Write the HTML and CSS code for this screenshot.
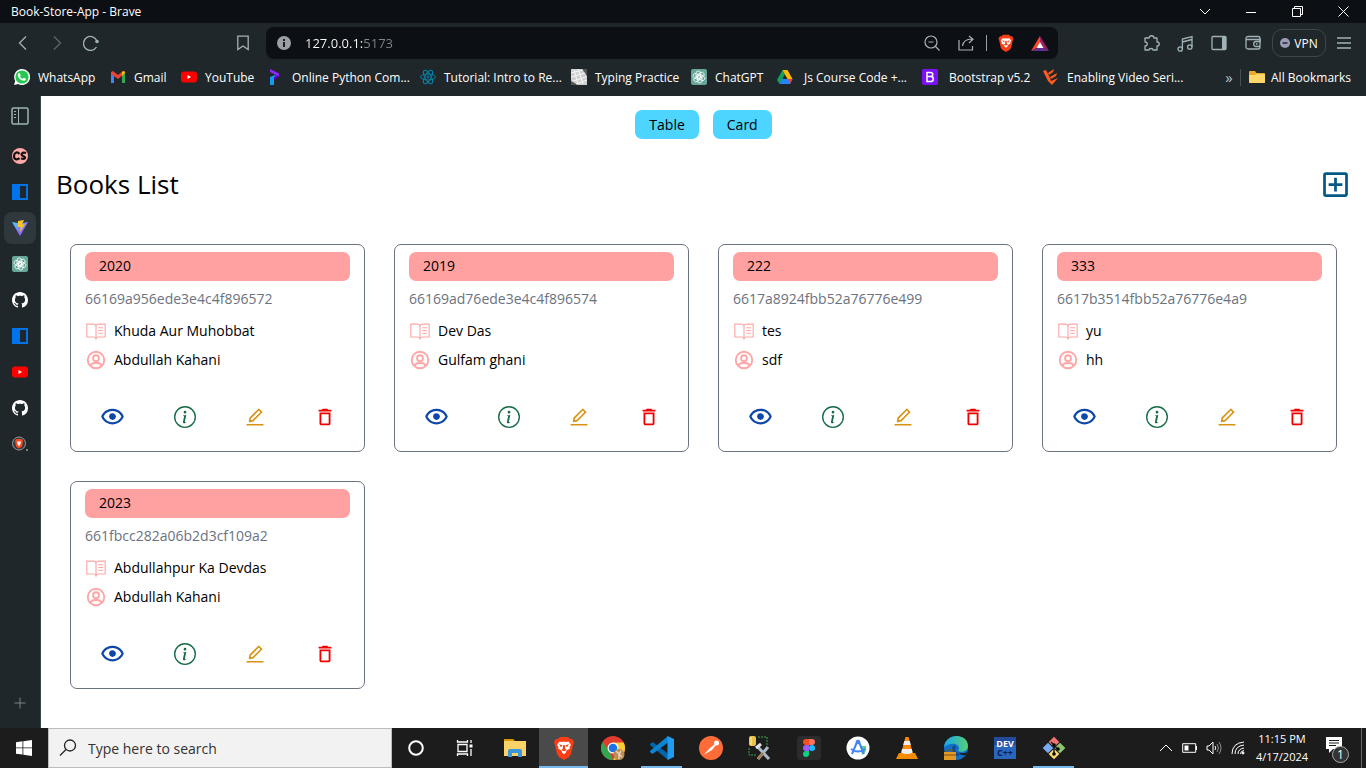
FILE: index.html
```html
<!DOCTYPE html>
<html lang="en">
<head>
<meta charset="utf-8">
<title>Book-Store-App</title>
<link rel="stylesheet" href="styles.css">
</head>
<body>
<svg class="sprite" aria-hidden="true">
  <symbol id="eye" viewBox="0 0 24 24"><path d="M12 9a3.02 3.02 0 0 0-3 3c0 1.642 1.358 3 3 3 1.641 0 3-1.358 3-3 0-1.641-1.359-3-3-3z"/><path d="M12 5c-7.633 0-9.927 6.617-9.948 6.684L1.946 12l.105.316C2.073 12.383 4.367 19 12 19s9.927-6.617 9.948-6.684l.106-.316-.105-.316C21.927 11.617 19.633 5 12 5zm0 12c-5.351 0-7.424-3.846-7.926-5C4.578 10.842 6.652 7 12 7c5.351 0 7.424 3.846 7.926 5-.504 1.158-2.578 5-7.926 5z"/></symbol>
  <symbol id="info" viewBox="0 0 16 16"><path d="M8 15A7 7 0 1 1 8 1a7 7 0 0 1 0 14m0 1A8 8 0 1 0 8 0a8 8 0 0 0 0 16"/><path d="m8.93 6.588-2.29.287-.082.38.45.083c.294.07.352.176.288.469l-.738 3.468c-.194.897.105 1.319.808 1.319.545 0 1.178-.252 1.465-.598l.088-.416c-.2.176-.492.246-.686.246-.275 0-.375-.193-.304-.533zM9 4.5a1 1 0 1 1-2 0 1 1 0 0 1 2 0"/></symbol>
  <symbol id="edit" viewBox="0 0 1024 1024"><path d="M257.7 752c2 0 4-.2 6-.5L431.9 722c2-.4 3.9-1.3 5.3-2.8l423.9-423.9a9.96 9.96 0 0 0 0-14.1L694.9 114.9c-1.9-1.9-4.4-2.9-7.1-2.9s-5.2 1-7.1 2.9L256.8 538.8c-1.5 1.5-2.4 3.3-2.8 5.3l-29.5 168.2a33.5 33.5 0 0 0 9.4 29.8c6.6 6.4 14.9 9.9 23.8 9.9zm67.4-174.4L687.8 215l73.3 73.3-362.7 362.6-88.9 15.7 15.6-89zM880 836H144c-17.7 0-32 14.3-32 32v36c0 4.4 3.6 8 8 8h784c4.4 0 8-3.6 8-8v-36c0-17.7-14.3-32-32-32z"/></symbol>
  <symbol id="trash" viewBox="0 0 24 24"><path d="M16 9v10H8V9h8m-1.500-6h-5l-1 1H5v2h14V4h-3.500l-1-1zM18 7H6v12c0 1.100.9 2 2 2h8c1.100 0 2-.9 2-2V7z"/></symbol>
  <symbol id="addbox" viewBox="0 0 24 24"><path d="M19 3H5a2 2 0 0 0-2 2v14a2 2 0 0 0 2 2h14c1.100 0 2-.9 2-2V5a2 2 0 0 0-2-2zm0 16H5V5h14v14zm-8-2h2v-4h4v-2h-4V7h-2v4H7v2h4z"/></symbol>
  <symbol id="book" viewBox="0 0 24 24"><g fill="none" stroke="currentColor" stroke-width="1.200"><path d="M12 6.500C11.500 5 10.500 4.500 9 4.500H2v14h7c1.700 0 2.600.6 3 2 .4-1.400 1.300-2 3-2h7v-14h-7c-1.500 0-2.500.5-3 2zM12 6.500v14M14.500 8.500h5M14.500 11.500h5M14.500 14.500h5"/></g></symbol>
  <symbol id="user" viewBox="0 0 24 24"><g fill="none" stroke="currentColor" stroke-width="2"><circle cx="12" cy="12" r="9"/><circle cx="12" cy="10" r="3.200"/><path d="M5.800 18.500c1-2.200 3-3.200 5.200-3.200h2c2.200 0 4.200 1 5.200 3.200"/></g></symbol>
  <symbol id="github" viewBox="0 0 16 16"><path fill="#fff" d="M8 0C3.580 0 0 3.580 0 8c0 3.540 2.290 6.530 5.470 7.590.4.070.550-.170.550-.380 0-.190-.010-.820-.010-1.490-2.010.370-2.530-.490-2.690-.940-.090-.230-.480-.940-.820-1.130-.280-.150-.680-.520-.010-.530.630-.010 1.080.580 1.230.820.720 1.210 1.870.870 2.330.660.070-.520.280-.870.510-1.070-1.780-.2-3.640-.890-3.640-3.950 0-.870.310-1.590.820-2.150-.080-.2-.360-1.020.080-2.120 0 0 .670-.210 2.200.820.640-.180 1.320-.270 2-.270s1.360.090 2 .270c1.530-1.040 2.200-.820 2.200-.820.440 1.100.160 1.920.080 2.120.510.560.820 1.270.820 2.150 0 3.070-1.870 3.750-3.650 3.950.290.250.540.730.540 1.480 0 1.070-.010 1.930-.010 2.200 0 .210.150.460.550.380A8.010 8.010 0 0 0 16 8c0-4.420-3.580-8-8-8z"/></symbol>
  <symbol id="youtube" viewBox="0 0 16 16"><rect y="2.500" width="16" height="11" rx="3" fill="#f00"/><path d="M6.500 6v4L10 8z" fill="#fff"/></symbol>
  <symbol id="gpt" viewBox="0 0 16 16"><rect width="16" height="16" rx="2" fill="#66a799"/><g fill="none" stroke="#fff" stroke-width=".8"><rect x="5" y="2" width="4.600" height="7.600" rx="2.300"/><rect x="5" y="2" width="4.600" height="7.600" rx="2.300" transform="rotate(60 8 8)"/><rect x="5" y="2" width="4.600" height="7.600" rx="2.300" transform="rotate(120 8 8)"/><rect x="5" y="2" width="4.600" height="7.600" rx="2.300" transform="rotate(180 8 8)"/><rect x="5" y="2" width="4.600" height="7.600" rx="2.300" transform="rotate(240 8 8)"/><rect x="5" y="2" width="4.600" height="7.600" rx="2.300" transform="rotate(300 8 8)"/></g></symbol>
  <symbol id="panel" viewBox="0 0 16 16"><path fill="#0075eb" d="M0 0h16v16H0z"/><path fill="#20272a" d="M8 2h6v12H8z"/></symbol>
  <symbol id="brave" viewBox="0 0 20 24"><path d="M6 1h8l2 2 2 0 2 3-1 3-2 9-2 3-5 3-5-3-2-3L1 9 0 6l2-3h2z" fill="#fb3d13"/><path d="M5.500 5.500l2.500.5 2-.5 2 .5 2.500-.5L17 9l-1.500 2 .5 1.500-3.500 2L12 16.500l-2 1.700-2-1.700-.5-2-3.500-2 .5-1.500L3 9z" fill="#fff"/><path d="M5 8.200l3.500 1-1.500 2zM15 8.200l-3.500 1 1.500 2zM9.200 9h1.600l.5 4 1.500 1-2.800 1.200L7.200 14l1.500-1z" fill="#fb3d13"/></symbol>
</svg>

<div class="desktop">
  <header class="browser">
    <div class="titlebar">
      <span class="window-title">Book-Store-App - Brave</span>
      <button class="win-btn" aria-label="Search tabs"><svg width="12" height="12" viewBox="0 0 12 12"><path d="M1 3l5 5 5-5"/></svg></button>
      <button class="win-btn" aria-label="Minimize"><svg width="10" height="10" viewBox="0 0 10 10"><path d="M0 5.500h10"/></svg></button>
      <button class="win-btn" aria-label="Restore"><svg width="11" height="11" viewBox="0 0 11 11"><path d="M.5 2.500h8v8h-8zM2.500 2.500v-2h8v8h-2"/></svg></button>
      <button class="win-btn" aria-label="Close"><svg width="11" height="11" viewBox="0 0 11 11"><path d="M.5.5l10 10M10.500.5l-10 10"/></svg></button>
    </div>
    <div class="toolbar">
      <div class="nav-group">
        <button class="tool" aria-label="Back"><svg width="16" height="16" viewBox="0 0 16 16"><path d="M11 1.500L4.500 8l6.500 6.500"/></svg></button>
        <button class="tool dim" aria-label="Forward"><svg width="16" height="16" viewBox="0 0 16 16"><path d="M5 1.500L11.500 8 5 14.500"/></svg></button>
        <button class="tool" aria-label="Reload"><svg width="16" height="16" viewBox="0 0 16 16"><path d="M14 6A7 7 0 1 0 13.500 12"/><circle cx="14" cy="6.500" r="1.800" fill="currentColor" stroke="none"/></svg></button>
        <button class="tool bookmark" aria-label="Bookmark this page"><svg width="16" height="16" viewBox="0 0 16 16"><path d="M2.800 1.200h10.400v13.300L8 11l-5.200 3.500z"/></svg></button>
      </div>
      <div class="address">
        <svg width="14" height="14" viewBox="0 0 14 14"><circle cx="7" cy="7" r="7" fill="#9aa0a6"/><path d="M7 3v2M7 6v5" stroke="#0c0f14" stroke-width="1.800"/></svg>
        <input class="url" type="text" value="127.0.0.1:5173" aria-label="Address">
        <button class="addr-btn" aria-label="Zoom"><svg width="16" height="16" viewBox="0 0 16 16"><circle cx="7" cy="7" r="6"/><path d="M4.500 7h5M11.500 11.500l4 4"/></svg></button>
        <button class="addr-btn narrow" aria-label="Share"><svg width="16" height="16" viewBox="0 0 16 16"><path d="M1 5v10h13.500v-4M4.500 11c.5-4 3-7 9.500-7M11 1l4 3.200L11 8"/></svg></button>
        <span class="addr-sep"></span>
        <button class="addr-btn narrow" aria-label="Brave Shields"><svg width="16" height="18"><use href="#brave"/></svg></button>
        <button class="addr-btn solid" aria-label="Rewards"><svg width="18" height="15" viewBox="0 0 18 15"><path d="M9 0L0 15l9-5z" fill="#ff4724"/><path d="M9 0l9 15-9-5z" fill="#9e1f63"/><path d="M0 15h18l-9-5z" fill="#662d91"/><path d="M9 6l3.500 6h-7z" fill="#fff"/></svg></button>
      </div>
      <div class="tool-group">
        <button class="tool" aria-label="Extensions"><svg width="17" height="17" viewBox="0 0 17 17"><path d="M2 3h4c0-3 5-3 5 0h3v4c3 0 3 4 0 4v4h-4c0-2-4-2-4 0H2v-4c3 0 3-4 0-4z" stroke-linejoin="round"/></svg></button>
        <button class="tool" aria-label="Playlist"><svg width="17" height="17" viewBox="0 0 17 17"><circle cx="3.200" cy="14" r="2.200"/><circle cx="12.800" cy="12" r="2.200"/><path d="M5.400 14V4L15 1.500V12M5.400 7L15 4.500"/></svg></button>
        <button class="tool" aria-label="Side panel"><svg width="16" height="16" viewBox="0 0 16 16"><rect x="1" y="1.500" width="14" height="13" rx="1"/><path d="M11 2h4v12h-4z" fill="currentColor" stroke="none"/></svg></button>
        <button class="tool" aria-label="Wallet"><svg width="16" height="16" viewBox="0 0 16 16"><rect x="1" y="1.500" width="14" height="12.500" rx="2"/><path d="M1 4.500h14v3M15 6.500h-4c-3 0-3 5 0 5h4M11 9h1.500"/></svg></button>
        <button class="vpn"><svg width="10" height="10" viewBox="0 0 10 10"><circle cx="5" cy="5" r="5" fill="#9a9cb5"/><path d="M2.500 5h5" stroke="#20272a" stroke-width="1.500"/></svg>VPN</button>
        <button class="tool" aria-label="Menu"><svg width="14" height="12" viewBox="0 0 14 12"><path d="M0 1h14M0 6h14M0 11h14"/></svg></button>
      </div>
    </div>
    <nav class="bookmarks">
      <div class="bookmark-list">
        <a href="#"><svg width="16" height="16" viewBox="0 0 16 16"><path d="M8 0a8 8 0 1 1-3.800 15L0 16l1.200-4A8 8 0 0 1 8 0z" fill="#fff"/><circle cx="8" cy="8" r="6.600" fill="#25c951"/><path d="M5.500 4l1.300 2.200-.8 1c.7 1.500 1.500 2 2.700 2.600l1-1 2.200 1c0 2-2 2.300-3.300 1.800C6 10.700 4.500 9 4 7c-.3-1.500.3-3 1.500-3z" fill="#fff"/></svg>WhatsApp</a>
        <a href="#"><svg width="16" height="16" viewBox="0 0 16 16"><path d="M1 4l3 2v8H1z" fill="#4285f4"/><path d="M12 6l3-2v10h-3z" fill="#34a853"/><path d="M1 3l2-1 5 4 5-4v4l-5 4-7-5z" fill="#ea4335"/><path d="M12 3c2-2 3-1 3 1l-3 3z" fill="#fbbc04"/></svg>Gmail</a>
        <a href="#"><svg width="16" height="16"><use href="#youtube"/></svg>YouTube</a>
        <a href="#"><svg width="16" height="16" viewBox="0 0 16 16"><path d="M2 0l9 4.500v3L6 10V7l2-1-6-3z" fill="#9127ff"/><path d="M2 8l5-2v3l-1 1v6H2z" fill="#159bea"/><path d="M6 8l4-2 1 1.500L6 11z" fill="#5c00d0"/></svg>Online Python Com...</a>
        <a href="#"><svg width="16" height="16" viewBox="0 0 16 16" fill="none" stroke="#087ea4"><ellipse cx="8" cy="8" rx="7.500" ry="3"/><ellipse cx="8" cy="8" rx="7.500" ry="3" transform="rotate(60 8 8)"/><ellipse cx="8" cy="8" rx="7.500" ry="3" transform="rotate(120 8 8)"/><circle cx="8" cy="8" r="1"/></svg>Tutorial: Intro to Re...</a>
        <a href="#"><svg width="16" height="16" viewBox="0 0 16 16"><path fill="#cfcfcf" d="M0 0h16v16H0z"/><path d="M11 0h5v7zM0 12l7 4H0z" fill="#555"/><path d="M0 4l12-3M0 8l14-4M2 12l13-4M5 15l11-4M3 1l4 14M7 0l5 15" stroke="#f7f7f7" fill="none"/></svg>Typing Practice</a>
        <a href="#"><svg width="16" height="16"><use href="#gpt"/></svg>ChatGPT</a>
        <a href="#" class="wide"><svg width="16" height="16" viewBox="0 0 16 16"><path d="M5.500 1L0 11l2.500 4L8 5z" fill="#12a15a"/><path d="M5.500 1h5l5 9h-5z" fill="#ffba00"/><path d="M5 10h10.500L13 15H2.500z" fill="#2684fc"/><path d="M11 10h4.500L13 15z" fill="#ea4335"/></svg>Js Course Code +...</a>
        <a href="#" class="wide"><svg width="16" height="16" viewBox="0 0 16 16"><rect width="16" height="16" rx="2" fill="#7b11f5"/><path d="M5 3.500h3.500c3 0 3 4 0 4H5zm0 4h4c3 0 3 5 0 5H5z" fill="none" stroke="#fff" stroke-width="1.500"/></svg>Bootstrap v5.2</a>
        <a href="#"><svg width="16" height="16" viewBox="0 0 16 16" fill="#ff5a1f"><path d="M0 2l3-1 4 8 1 3 7-3-6 7-4-4z"/><path d="M5 4l6-4-1 3-4 3zM7 8l7-4-1 3-5 3z"/></svg>Enabling Video Seri...</a>
      </div>
      <button class="more" aria-label="More bookmarks">»</button>
      <a href="#" class="all-bookmarks"><svg width="16" height="14" viewBox="0 0 16 14"><path d="M0 2q0-1 1-1h5l1.500 2H15q1 0 1 1v8q0 1-1 1H1q-1 0-1-1z" fill="#e8a92c"/><path d="M0 5h6l1.500-1H16v8q0 1-1 1H1q-1 0-1-1z" fill="#ffd768"/></svg>All Bookmarks</a>
    </nav>
  </header>

  <div class="window-body">
    <aside class="sidebar">
      <button class="tab-toggle" aria-label="Toggle vertical tabs"><svg width="18" height="18" viewBox="0 0 18 18" fill="none" stroke="#9fb2b8"><rect x="1" y="1" width="16" height="16" rx="1.500" stroke-width="1.500"/><path d="M7.500 1v16M3 4.500h2M3 7.500h2M3 10.500h2"/></svg></button>
      <div class="tabs">
        <button class="tab" aria-label="CS"><svg width="16" height="16" viewBox="0 0 16 16"><circle cx="8" cy="8" r="8" fill="#ffaaa9"/><path d="M7.500 6C5 3 2 5 2 8c0 3.500 3 4.500 5.500 2M14 5c-4-1.500-6 2-3 3s3 4-2 2.500" fill="none" stroke="#111" stroke-width="2.200"/></svg></button>
        <button class="tab" aria-label="Panel"><svg width="16" height="16"><use href="#panel"/></svg></button>
        <button class="tab active" aria-label="Book-Store-App"><svg width="16" height="16" viewBox="0 0 16 16"><defs><linearGradient id="vite" x1="0" x2="1" y2="1"><stop stop-color="#41d1ff"/><stop offset="1" stop-color="#bd34fe"/></linearGradient></defs><path d="M0 2l8 1.500L16 2 8 16z" fill="url(#vite)"/><path d="M6 1l6-1-2 4.500 3-.5-5 8 .7-5H5.500z" fill="#ffc517"/></svg></button>
        <button class="tab" aria-label="ChatGPT"><svg width="16" height="16"><use href="#gpt"/></svg></button>
        <button class="tab" aria-label="GitHub"><svg width="16" height="16"><use href="#github"/></svg></button>
        <button class="tab" aria-label="Panel"><svg width="16" height="16"><use href="#panel"/></svg></button>
        <button class="tab" aria-label="YouTube"><svg width="16" height="16"><use href="#youtube"/></svg></button>
        <button class="tab" aria-label="GitHub"><svg width="16" height="16"><use href="#github"/></svg></button>
        <button class="tab" aria-label="Brave Search"><svg width="16" height="16" viewBox="0 0 16 16"><circle cx="7" cy="7.500" r="6.500" fill="#38393d" stroke="#999"/><path d="M3 5l1.500-2h5L11 5l-1 5.500L7 12.500l-3-2z" fill="#ff4a20"/><path d="M5 5.500h4L8 9l-1 1-1-1z" fill="#fff"/><circle cx="15" cy="14" r="1" fill="#999"/></svg></button>
      </div>
      <button class="new-tab" aria-label="New tab"><svg width="12" height="12" viewBox="0 0 12 12"><path d="M6 .5v11M.5 6h11" stroke="#7b8285"/></svg></button>
    </aside>

    <main class="page">
      <div class="view-switch">
        <button>Table</button>
        <button>Card</button>
      </div>
      <div class="page-head">
        <h1>Books List</h1>
        <a href="#" class="add" aria-label="Add book"><svg width="33" height="33"><use href="#addbox"/></svg></a>
      </div>
      <div class="cards">
        <article class="card">
          <h2>2020</h2><p class="id">66169a956ede3e4c4f896572</p>
          <p class="row"><svg><use href="#book"/></svg>Khuda Aur Muhobbat</p>
          <p class="row"><svg><use href="#user"/></svg>Abdullah Kahani</p>
          <div class="actions"><button class="view" aria-label="Preview"><svg><use href="#eye"/></svg></button><a href="#" class="info" aria-label="Details"><svg><use href="#info"/></svg></a><a href="#" class="edit" aria-label="Edit"><svg><use href="#edit"/></svg></a><a href="#" class="delete" aria-label="Delete"><svg><use href="#trash"/></svg></a></div>
        </article>
        <article class="card">
          <h2>2019</h2><p class="id">66169ad76ede3e4c4f896574</p>
          <p class="row"><svg><use href="#book"/></svg>Dev Das</p>
          <p class="row"><svg><use href="#user"/></svg>Gulfam ghani</p>
          <div class="actions"><button class="view" aria-label="Preview"><svg><use href="#eye"/></svg></button><a href="#" class="info" aria-label="Details"><svg><use href="#info"/></svg></a><a href="#" class="edit" aria-label="Edit"><svg><use href="#edit"/></svg></a><a href="#" class="delete" aria-label="Delete"><svg><use href="#trash"/></svg></a></div>
        </article>
        <article class="card">
          <h2>222</h2><p class="id">6617a8924fbb52a76776e499</p>
          <p class="row"><svg><use href="#book"/></svg>tes</p>
          <p class="row"><svg><use href="#user"/></svg>sdf</p>
          <div class="actions"><button class="view" aria-label="Preview"><svg><use href="#eye"/></svg></button><a href="#" class="info" aria-label="Details"><svg><use href="#info"/></svg></a><a href="#" class="edit" aria-label="Edit"><svg><use href="#edit"/></svg></a><a href="#" class="delete" aria-label="Delete"><svg><use href="#trash"/></svg></a></div>
        </article>
        <article class="card">
          <h2>333</h2><p class="id">6617b3514fbb52a76776e4a9</p>
          <p class="row"><svg><use href="#book"/></svg>yu</p>
          <p class="row"><svg><use href="#user"/></svg>hh</p>
          <div class="actions"><button class="view" aria-label="Preview"><svg><use href="#eye"/></svg></button><a href="#" class="info" aria-label="Details"><svg><use href="#info"/></svg></a><a href="#" class="edit" aria-label="Edit"><svg><use href="#edit"/></svg></a><a href="#" class="delete" aria-label="Delete"><svg><use href="#trash"/></svg></a></div>
        </article>
        <article class="card">
          <h2>2023</h2><p class="id">661fbcc282a06b2d3cf109a2</p>
          <p class="row"><svg><use href="#book"/></svg>Abdullahpur Ka Devdas</p>
          <p class="row"><svg><use href="#user"/></svg>Abdullah Kahani</p>
          <div class="actions"><button class="view" aria-label="Preview"><svg><use href="#eye"/></svg></button><a href="#" class="info" aria-label="Details"><svg><use href="#info"/></svg></a><a href="#" class="edit" aria-label="Edit"><svg><use href="#edit"/></svg></a><a href="#" class="delete" aria-label="Delete"><svg><use href="#trash"/></svg></a></div>
        </article>
      </div>
    </main>
  </div>

  <footer class="taskbar">
    <button class="start" aria-label="Start"><svg width="16" height="16" viewBox="0 0 16 16" fill="#fff"><path d="M0 2.200L6.500 1.300v6.200H0zM7.300 1.200L16 0v7.500H7.300zM0 8.300h6.500v6.300L0 13.700zM7.300 8.300H16V16l-8.700-1.200z"/></svg></button>
    <label class="search">
      <svg width="18" height="18" viewBox="0 0 18 18" fill="none" stroke="#222" stroke-width="1.300"><circle cx="11" cy="6.500" r="5.500"/><path d="M7 10.500L1 16.500"/></svg>
      <input type="text" placeholder="Type here to search" aria-label="Search">
    </label>
    <div class="apps">
      <button class="app" aria-label="Cortana"><svg width="18" height="18" viewBox="0 0 18 18"><circle cx="9" cy="9" r="6.800" fill="none" stroke="#fff" stroke-width="2"/></svg></button>
      <button class="app" aria-label="Task view"><svg width="18" height="18" viewBox="0 0 18 18" fill="none" stroke="#fff" stroke-width="1.300"><path d="M2 5.500h9v7H2zM1.500 1v2h10V1M1.500 17v-2h10v2M15 1v3M15 10v7"/><path d="M13.500 5.500h3v3h-3z" fill="#fff" stroke="none"/></svg></button>
      <button class="app" aria-label="File Explorer"><svg width="22" height="18" viewBox="0 0 22 18"><path d="M0 0h9l2 2H0z" fill="#d99a00"/><path d="M0 2h22v15H0z" fill="#fdd367"/><path d="M4 18v-6q0-2 2-2h10q2 0 2 2v6h-4v-4H8v4z" fill="#3a96dd"/></svg></button>
      <button class="app current running" aria-label="Brave"><svg width="20" height="24"><use href="#brave"/></svg></button>
      <button class="app" aria-label="Chrome"><svg width="24" height="24" viewBox="0 0 24 24"><circle cx="12" cy="12" r="12" fill="#e33b2e"/><path d="M1.600 6L9 17l3 7A12 12 0 0 1 1.600 6z" fill="#31a850"/><path d="M12 6.500h10.700A12 12 0 0 1 12 24l5-9z" fill="#fcc934"/><circle cx="12" cy="12" r="5.500" fill="#fff"/><circle cx="12" cy="12" r="4.300" fill="#1a73e8"/><circle cx="18" cy="18.500" r="5.500" fill="#b98c5a"/><path d="M15 15l3 3v5M20 15l-2 3 3 3" stroke="#e8d4b0" fill="none" stroke-width="1.500"/></svg></button>
      <button class="app running" aria-label="Visual Studio Code"><svg width="24" height="24" viewBox="0 0 24 24"><path d="M0 8l2.500-2L18 17.500V24L0 9z" fill="#0065a9"/><path d="M0 16l2.500 2L18 6.500V0L0 15z" fill="#0b84d2"/><path d="M17.500 0L24 3v18l-6.500 3z" fill="#1f9cf0"/></svg></button>
      <button class="app" aria-label="Postman"><svg width="24" height="24" viewBox="0 0 24 24"><circle cx="12" cy="12" r="12" fill="#ff6c37"/><path d="M5 18.500L11 12l5-4 1 1-4 5-6 3.500z" fill="#fff"/><circle cx="17.500" cy="7" r="2.500" fill="#fff"/></svg></button>
      <button class="app" aria-label="Database tools"><svg width="24" height="24" viewBox="0 0 24 24"><path d="M10 1h9v9M1 12v7h8" fill="none" stroke="#39a845" stroke-dasharray="2 1"/><rect x="1" width="7" height="10" rx="2" fill="#ebc34a"/><path d="M3 1v8" stroke="#fff1a0"/><path d="M9 10l12 13M20 11L10 23" stroke="#aab8c8" stroke-width="3"/><path d="M15 17l-5 6" stroke="#a57744" stroke-width="2"/><path d="M8 12l5-4" stroke="#dde4ec" stroke-width="3"/></svg></button>
      <button class="app" aria-label="Figma"><svg width="24" height="24" viewBox="0 0 24 24"><rect width="24" height="24" rx="3" fill="#2c2c2c"/><path d="M12 3H9a3 3 0 0 0 0 6h3z" fill="#f24e1e"/><path d="M12 3h3a3 3 0 0 1 0 6h-3z" fill="#ff7262"/><path d="M12 9H9a3 3 0 0 0 0 6h3z" fill="#a259ff"/><circle cx="15" cy="12" r="3" fill="#1abcfe"/><path d="M12 15H9a3 3 0 1 0 3 3z" fill="#0acf83"/></svg></button>
      <button class="app" aria-label="Android Studio"><svg width="24" height="24" viewBox="0 0 24 24"><circle cx="12" cy="12" r="11.500" fill="#fff"/><path d="M14 10h6v5l-4 4z" fill="#4fd189"/><path d="M11 6L6 18M13 6l5 12M5 13q7 5 14 0" fill="none" stroke="#4285f4" stroke-width="2"/><circle cx="12" cy="6" r="2.300" fill="#4285f4"/></svg></button>
      <button class="app" aria-label="VLC"><svg width="22" height="24" viewBox="0 0 22 24"><path d="M3 17h16l3 6H0z" fill="#f48b00"/><path d="M9.500 1h3L17 18q-6 4-12 0z" fill="#ff8b0a"/><path d="M8.300 5h5.500l1 4H7.200zM6 13h9.800l.8 3.500q-5.600 3-11.400 0z" fill="#eee"/></svg></button>
      <button class="app" aria-label="Edge"><svg width="24" height="24" viewBox="0 0 24 24"><defs><linearGradient id="edge" x2="1"><stop stop-color="#1ba7e5"/><stop offset="1" stop-color="#55cf78"/></linearGradient></defs><circle cx="12" cy="12" r="12" fill="#1470c4"/><path d="M0 11C2-4 24-3 24 10c0 5-6 7-10 5 4-5-4-11-14-4z" fill="url(#edge)"/><path d="M24 15.500c-2 1.500-6 2.300-9 1 .5 2 3 3 6.500 2.500z" fill="#1c1c1c"/><path d="M11 10c-3 4-1 8 4 9" fill="none" stroke="#124a91" stroke-width="3"/><path d="M0 16h12v8H0z" fill="#e39a25"/><path d="M3 16v-2h6v2M0 19h12" stroke="#80510e" fill="none"/></svg></button>
      <button class="app" aria-label="Dev-C++"><svg width="22" height="22" viewBox="0 0 22 22"><rect width="22" height="22" fill="#2b66bd"/><path d="M0 0h22v8H0z" fill="#244a9b"/><text class="logo-text" x="11" y="10" text-anchor="middle" fill="#fff">DEV</text><text class="logo-text" x="11" y="19" text-anchor="middle" fill="#08215c">C++</text></svg></button>
      <button class="app running" aria-label="Git Bash"><svg width="24" height="24" viewBox="0 0 24 24"><g transform="rotate(45 12 12)"><rect x="4" y="4" width="7.500" height="7.500" fill="#f07474"/><rect x="12.500" y="4" width="7.500" height="7.500" fill="#8fc76e"/><rect x="4" y="12.500" width="7.500" height="7.500" fill="#77aaf0"/><rect x="12.500" y="12.500" width="7.500" height="7.500" fill="#ffdd70"/></g><path d="M9 6l3 3v9M12 10l4 3" stroke="#222" stroke-width="1.500" fill="none"/><circle cx="12" cy="9" r="1.800"/><circle cx="12" cy="18" r="1.800"/><circle cx="16" cy="13" r="1.800"/></svg></button>
    </div>
    <div class="tray">
      <button aria-label="Hidden icons"><svg width="14" height="10" viewBox="0 0 14 10"><path d="M1 8l6-6 6 6"/></svg></button>
      <button aria-label="Battery"><svg width="16" height="10" viewBox="0 0 16 10"><path d="M.7.7h13v8.600H.7zM14.500 3v4"/><path d="M2.500 2.500h4v5h-4z" fill="#fff" stroke="none"/></svg></button>
      <button aria-label="Volume"><svg width="16" height="14" viewBox="0 0 16 14"><path d="M1 5h2l4-4v12L3 9H1z"/><path d="M9 5q1.500 2 0 4"/><path d="M11 3q3 4 0 8M13 1q4 6 0 12" opacity=".5"/></svg></button>
      <button aria-label="Network"><svg width="14" height="14" viewBox="0 0 14 14" stroke-width="1"><path d="M1 13Q1 2 13 1M4 13q0-8 9-9M7 13q0-5 6-6M9.500 13q0-3 3.500-3.500"/><circle cx="12" cy="12" r="1" fill="#fff"/></svg></button>
      <button class="clock"><span>11:15 PM</span><span>4/17/2024</span></button>
      <button class="notify" aria-label="1 notification"><svg width="26" height="26" viewBox="0 0 26 26"><path d="M1 2h16v12H8l-4 4v-4H1z" fill="#fff" stroke="none"/><path d="M4 5.500h10M4 8h10M4 10.500h7" stroke="#1c1c1c"/></svg><span class="badge">1</span></button>
    </div>
  </footer>
</div>
</body>
</html>
```
FILE: styles.css
```css
* { box-sizing: border-box; }
body {
  margin: 0;
  font-family: "Open Sans", "Noto Sans", sans-serif;
  font-size: 12px;
  color: #fff;
}
button, input { font: inherit; color: inherit; border: 0; padding: 0; background: none; }
button { display: flex; align-items: center; justify-content: center; }
a { color: inherit; text-decoration: none; }
h1, h2, p { margin: 0; font-weight: 400; }
svg { display: block; flex: none; }
.sprite { display: none; }
.desktop { display: flex; flex-direction: column; min-height: 100vh; }

/* Browser chrome */
.browser { background: #20272a; }
.titlebar { display: flex; height: 23px; background: #0c0f14; padding-left: 11px; align-items: center; }
.window-title { flex: 1; }
.win-btn { width: 46px; height: 22px; }
.win-btn svg { fill: none; stroke: #fff; }
.toolbar { display: grid; grid-template-columns: 266px 1fr 308px; align-items: center; padding: 4px 0 0; }
.nav-group, .tool-group { display: flex; align-items: center; color: #9fb2b8; }
.nav-group { padding: 0 6px; }
.tool { width: 34px; height: 32px; }
.tool svg { fill: none; stroke: currentColor; stroke-width: 1.3; }
.dim { opacity: .45; }
.bookmark { margin-left: auto; }
.tool-group { justify-content: flex-end; padding-right: 5px; }
.address { display: flex; align-items: center; height: 32px; border-radius: 8px; background: #0c0f14; padding-left: 11px; }
.url {
  flex: 1; min-width: 0; margin-left: 14px; outline: 0; font-size: 13px;
  background: linear-gradient(90deg, #fff 58px, #81878b 58px);
  background-clip: text; color: transparent;
}
.addr-btn { width: 36px; height: 32px; }
.addr-btn.narrow { width: 32px; }
.addr-btn svg { fill: none; stroke: #aeb2b5; stroke-width: 1.2; }
.addr-btn svg:has(use), .addr-btn.solid svg { stroke: none; }
.addr-sep { width: 1px; height: 16px; margin: 0 3px 0 4px; background: #9aa0a6; }
.vpn { gap: 4px; width: 54px; height: 28px; border: 1px solid #3c474b; border-radius: 10px; color: #fff; margin: 0 1px 0 2px; }
.bookmarks { display: flex; align-items: center; height: 37px; padding: 0 15px 1px 14px; white-space: nowrap; }
.bookmark-list { flex: 1; min-width: 0; overflow: hidden; display: grid; grid-template-columns: 96px 71px 87px 152px 151px 120px 86px 145px 121px 1fr; }
.bookmarks a { display: flex; align-items: center; gap: 8px; }
.bookmarks .wide { gap: 11px; }
.more { width: 22px; color: #b3c0c5; font-size: 15px; }
.bookmarks .all-bookmarks { border-left: 1px solid #465054; padding-left: 8px; gap: 6px; }

.window-body { flex: 1; display: flex; }
.sidebar { width: 41px; flex: none; display: flex; flex-direction: column; align-items: center; background: #20272a; border-right: 1px solid #39464a; }
.tab-toggle { width: 40px; height: 40px; }
.tabs { display: flex; flex-direction: column; gap: 4px; padding-top: 4px; }
.tab { width: 32px; height: 32px; border-radius: 8px; }
.tab.active { background: #2f393d; }
.new-tab { width: 32px; height: 32px; margin: auto 0 9px; }

/* Book store page */
.page { flex: 1; min-width: 0; padding: 14px; background: #fff; color: #000; font-size: 14px; line-height: 22px; }
.view-switch { display: flex; justify-content: center; gap: 14px; }
.view-switch button { height: 29px; padding: 0 14px; border-radius: 7px; background: #4dd5ff; }
.page-head { display: flex; align-items: center; justify-content: space-between; padding: 28px 0 29px; }
.page-head h1 { font-size: 26px; line-height: 34px; padding-left: 1px; }
.add { color: #075985; }
.add svg, .card svg { fill: currentColor; }
.cards { display: grid; grid-template-columns: repeat(4, 1fr); gap: 29px; padding: 14px 15px; }
.card { border: 1px solid #6b7280; border-radius: 7px; padding: 7px 14px; }
.card h2 { height: 29px; padding: 0 14px; border-radius: 7px; background: #ffa1a1; font-size: 14px; line-height: 28px; }
.id { color: #6b7280; padding: 7px 0 6px; }
.row { display: flex; align-items: center; gap: 7px; height: 29px; }
.row svg { width: 22px; height: 22px; color: #ffa5a5; }
.actions { display: flex; align-items: center; justify-content: space-between; padding: 14px; margin-top: 15px; height: 55px; }
.actions svg { width: 22px; height: 22px; }
.actions .view svg { width: 27px; height: 27px; }
.view { color: #0d47a9; }
.info { color: #166d46; }
.edit { color: #d89211; }
.delete { color: #f00000; }

/* Desktop taskbar */
.taskbar { display: flex; height: 40px; background: #1c1c1c; }
.start { width: 48px; }
.search { display: flex; align-items: center; width: 344px; padding: 0 10px; gap: 11px; background: #f2f2f2; border: 1px solid #bcbcbc; }
.search input { flex: 1; min-width: 0; color: #333; font-size: 14px; outline: 0; }
.search input::placeholder { color: #333; opacity: 1; }
.apps { display: flex; flex: 1; }
.app { position: relative; width: 49px; }
.app:first-child { width: 48px; }
.app:nth-child(2) { width: 50px; }
.current { background: #4a4a4a; }
.running::after { content: ""; position: absolute; bottom: 0; left: 4px; right: 4px; height: 2px; background: #76b9ed; }
.current::after { left: 0; right: 0; }
.logo-text { font: 700 9px "Open Sans", sans-serif; }
.tray { display: flex; align-items: center; padding-right: 4px; }
.tray button { width: 24px; height: 40px; }
.tray svg { fill: none; stroke: #fff; }
.tray .clock { flex-direction: column; width: 64px; line-height: 18px; font-size: 11px; }
.tray .notify { position: relative; width: 48px; border-right: 1px solid #666; }
.badge { position: absolute; right: 12px; bottom: 5px; width: 17px; height: 17px; border: 1px solid #aaa; border-radius: 50%; background: #333; line-height: 15px; }
```
